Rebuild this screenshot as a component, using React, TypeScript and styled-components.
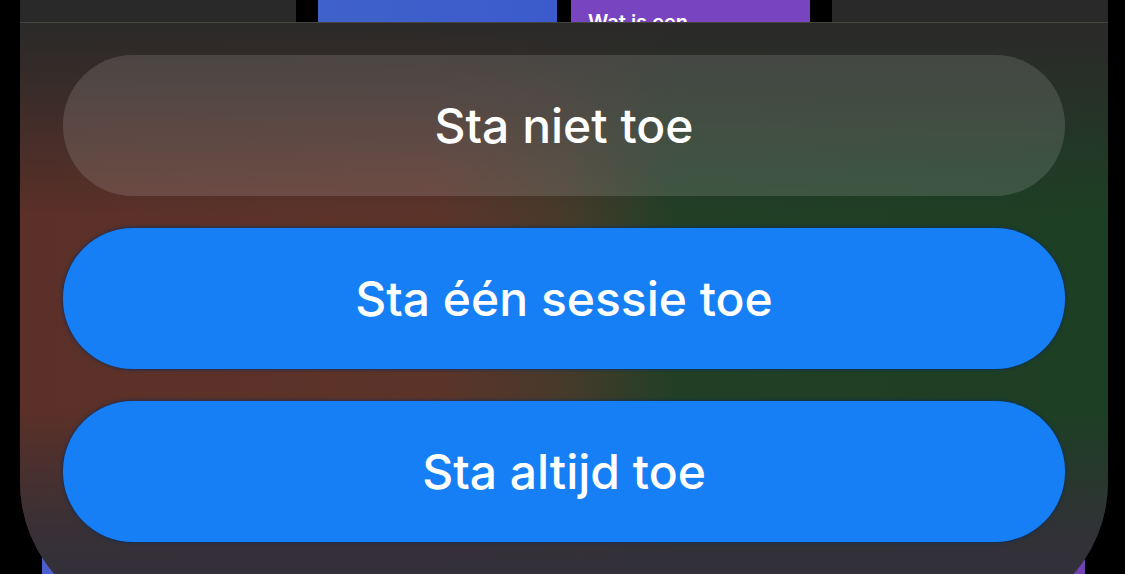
import styled, { createGlobalStyle } from "styled-components";

const GlobalStyle = createGlobalStyle`
  html, body {
    margin: 0;
    padding: 0;
    background: #000;
  }
  body {
    font-family: Inter, "Noto Sans", "Liberation Sans", sans-serif;
    -webkit-font-smoothing: antialiased;
  }
`;

const Screen = styled.div`
  position: relative;
  width: 1125px;
  height: 574px;
  overflow: hidden;
  background: #000;
  padding: 0 17px 0 20px;
  box-sizing: border-box;
  display: flex;
  flex-direction: column;
  justify-content: space-between;
`;

const TileRow = styled.div`
  display: flex;
  height: 40px;
`;

const Tile = styled.div<{ $w: number; $bg: string; $ml?: number }>`
  width: ${(p) => p.$w}px;
  margin-left: ${(p) => p.$ml ?? 0}px;
  background: ${(p) => p.$bg};
  box-sizing: border-box;
  padding: 10px 17px;
  color: #fff;
  font-weight: 600;
  font-size: 20px;
  white-space: nowrap;
`;

const BottomRow = styled.div`
  display: flex;
  height: 60px;
  padding: 0 23px 0 22px;
`;

const Sheet = styled.div`
  position: absolute;
  top: 22px;
  left: 20px;
  right: 17px;
  height: 600px;
  border-top: 1px solid #45443f;
  border-radius: 0 0 140px 140px;
  box-sizing: border-box;
  padding: 32px 43px;
  display: flex;
  flex-direction: column;
  gap: 32px;
  background:
    linear-gradient(
      180deg,
      #2b2a29 0px,
      rgba(43, 42, 41, 0.85) 40px,
      rgba(43, 42, 41, 0) 190px,
      rgba(43, 42, 41, 0) 390px,
      rgba(51, 48, 56, 0.9) 510px,
      #33303a 560px
    ),
    linear-gradient(
      90deg,
      #5a3028 0%,
      #5c3329 38%,
      #463a2b 50%,
      #223f26 60%,
      #1d3f24 100%
    );
`;

const ActionButton = styled.button<{ $primary?: boolean }>`
  height: 141px;
  flex: none;
  border: none;
  border-radius: 70px;
  font-family: Inter, "Noto Sans", "Liberation Sans", sans-serif;
  font-size: 48px;
  font-weight: 500;
  color: #fff;
  cursor: pointer;
  background: ${(p) => (p.$primary ? "#167ff5" : "rgba(255, 255, 255, 0.13)")};
  box-shadow: ${(p) =>
    p.$primary ? "0 0 3px 1px rgba(8, 45, 100, 0.7)" : "none"};
`;

export default function App() {
  return (
    <>
      <GlobalStyle />
      <Screen>
        <TileRow>
          <Tile $w={276} $bg="#2a2929" />
          <Tile $w={239} $ml={22} $bg="linear-gradient(90deg,#3f62c9,#3b5bcc)" />
          <Tile $w={239} $ml={14} $bg="#7944bf">
            Wat is een
          </Tile>
          <Tile $w={276} $ml={22} $bg="#2a2929" />
        </TileRow>
        <BottomRow>
          <Tile $w={515} $bg="#4b5ecd" />
          <Tile $w={514} $ml={14} $bg="#7440b6" />
        </BottomRow>
        <Sheet>
          <ActionButton>Sta niet toe</ActionButton>
          <ActionButton $primary>Sta één sessie toe</ActionButton>
          <ActionButton $primary>Sta altijd toe</ActionButton>
        </Sheet>
      </Screen>
    </>
  );
}
